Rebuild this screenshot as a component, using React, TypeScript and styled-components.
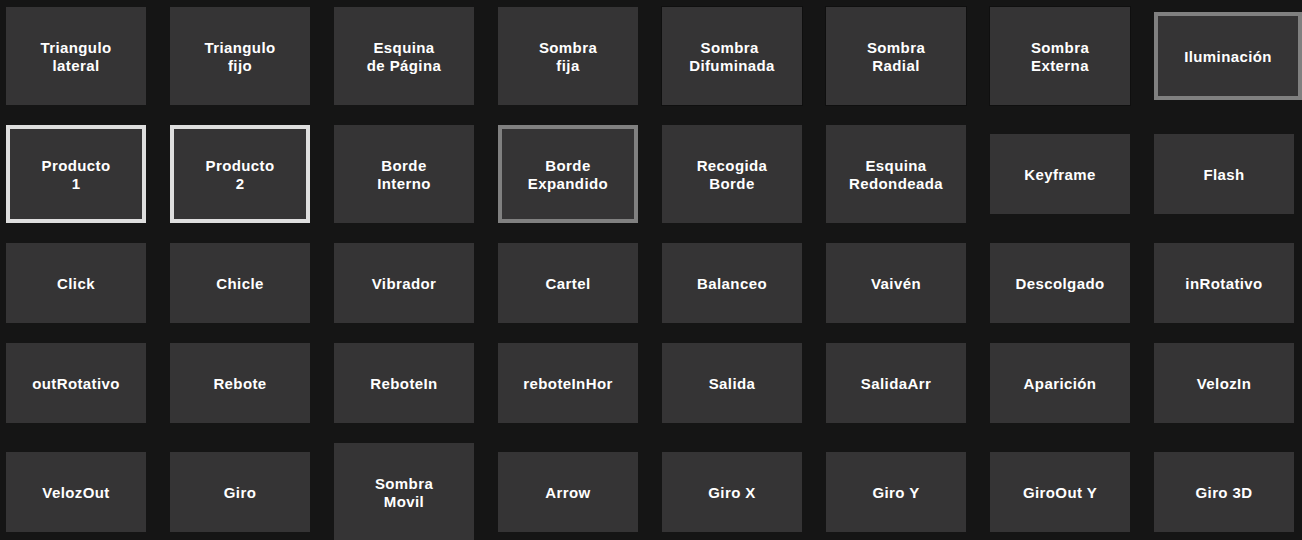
import React from "react";
import styled, { createGlobalStyle, css } from "styled-components";

const GlobalStyle = createGlobalStyle`
  html, body {
    margin: 0;
    padding: 0;
    background-color: #151515;
    overflow: hidden;
  }
  body {
    font-family: "Liberation Sans", Arial, sans-serif;
  }
`;

type TileSize = "tall" | "short" | "wide";
type TileFrame = "none" | "light" | "grey" | "shade";

interface Effect {
  label: string[];
  size: TileSize;
  frame?: TileFrame;
}

const GridDivStyled = styled.div`
  display: grid;
  grid-template-columns: repeat(8, 140px);
  column-gap: 24px;
  row-gap: 20px;
  align-items: center;
  justify-items: start;
  padding: 7px 0 0 6px;
`;

const TileButton = styled.div<{ $size: TileSize; $frame: TileFrame }>`
  box-sizing: border-box;
  width: ${(p) => (p.$size === "wide" ? "148px" : "140px")};
  height: ${(p) =>
    p.$size === "tall" ? "98px" : p.$size === "wide" ? "88px" : "80px"};
  padding-top: 2px;
  background-color: #353435;
  color: #ffffff;
  font-weight: bold;
  font-size: 15px;
  letter-spacing: 0.4px;
  line-height: 18px;
  display: flex;
  flex-direction: column;
  align-items: center;
  justify-content: center;
  text-align: center;
  cursor: pointer;
  user-select: none;
  ${(p) =>
    p.$frame === "light" &&
    css`
      border: 4px solid #dedede;
    `}
  ${(p) =>
    p.$frame === "grey" &&
    css`
      border: 4px solid #808080;
    `}
  ${(p) =>
    p.$frame === "shade" &&
    css`
      box-shadow: 0 0 0 1px #0f0f0f;
    `}
  span {
    display: block;
    white-space: pre;
  }
`;

const effects: Effect[] = [
  { label: ["Triangulo", "lateral"], size: "tall" },
  { label: ["Triangulo", "fijo"], size: "tall" },
  { label: ["Esquina", "de Página"], size: "tall" },
  { label: ["Sombra", "fija"], size: "tall" },
  { label: ["Sombra ", "Difuminada"], size: "tall", frame: "shade" },
  { label: ["Sombra", "Radial"], size: "tall", frame: "shade" },
  { label: ["Sombra", "Externa"], size: "tall", frame: "shade" },
  { label: ["Iluminación"], size: "wide", frame: "grey" },

  { label: ["Producto", "1"], size: "tall", frame: "light" },
  { label: ["Producto", "2"], size: "tall", frame: "light" },
  { label: ["Borde", "Interno"], size: "tall" },
  { label: ["Borde", "Expandido"], size: "tall", frame: "grey" },
  { label: ["Recogida", "Borde"], size: "tall" },
  { label: ["Esquina", "Redondeada"], size: "tall" },
  { label: ["Keyframe"], size: "short" },
  { label: ["Flash"], size: "short" },

  { label: ["Click"], size: "short" },
  { label: ["Chicle"], size: "short" },
  { label: ["Vibrador"], size: "short" },
  { label: ["Cartel"], size: "short" },
  { label: ["Balanceo"], size: "short" },
  { label: ["Vaivén"], size: "short" },
  { label: ["Descolgado"], size: "short" },
  { label: ["inRotativo"], size: "short" },

  { label: ["outRotativo"], size: "short" },
  { label: ["Rebote"], size: "short" },
  { label: ["ReboteIn"], size: "short" },
  { label: ["reboteInHor"], size: "short" },
  { label: ["Salida"], size: "short" },
  { label: ["SalidaArr"], size: "short" },
  { label: ["Aparición"], size: "short" },
  { label: ["VelozIn"], size: "short" },

  { label: ["VelozOut"], size: "short" },
  { label: ["Giro"], size: "short" },
  { label: ["Sombra", "Movil"], size: "tall" },
  { label: ["Arrow"], size: "short" },
  { label: ["Giro X"], size: "short" },
  { label: ["Giro Y"], size: "short" },
  { label: ["GiroOut Y"], size: "short" },
  { label: ["Giro 3D"], size: "short" },
];

const App: React.FC = () => {
  return (
    <>
      <GlobalStyle />
      <GridDivStyled>
        {effects.map((effect, idx) => (
          <TileButton
            key={effect.label.join("-") + idx}
            $size={effect.size}
            $frame={effect.frame || "none"}
          >
            {effect.label.map((line) => (
              <span key={line}>{line}</span>
            ))}
          </TileButton>
        ))}
      </GridDivStyled>
    </>
  );
};

export default App;
